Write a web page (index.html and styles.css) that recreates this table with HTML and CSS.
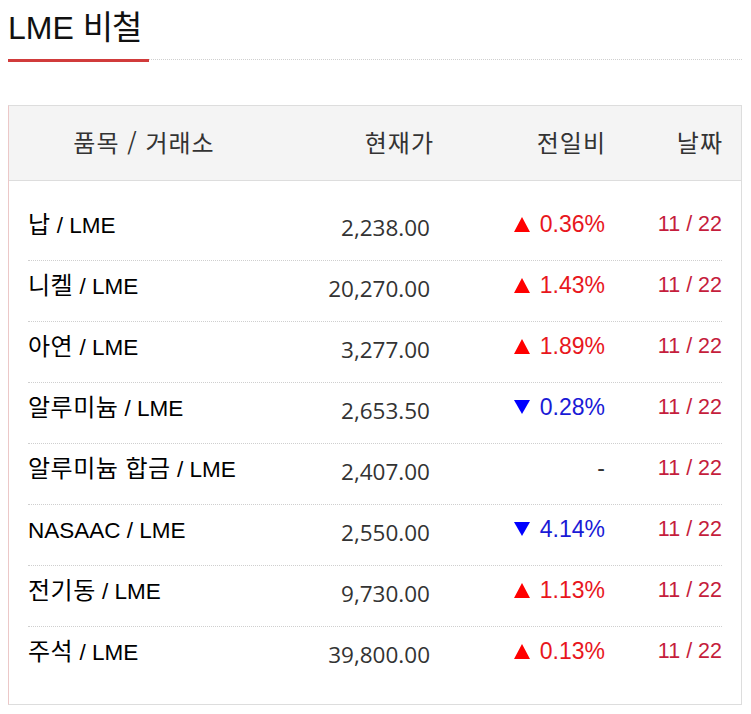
FILE: index.html
```html
<!DOCTYPE html>
<html lang="ko">
<head>
<meta charset="utf-8">
<link rel="stylesheet" href="styles.css">
</head>
<body>
<div class="page">
  <div class="title-bar">
    <h1 class="title">LME <span class="ko">비철</span></h1>
    <div class="title-rule"></div>
  </div>

  <div class="board">
    <div class="head grid">
      <div class="h-name">품목 / 거래소</div>
      <div class="h-price">현재가</div>
      <div class="h-chg">전일비</div>
      <div class="h-date">날짜</div>
    </div>
    <div class="rows">
      <div class="row grid">
        <div class="name"><span class="ko">납</span> / LME</div>
        <div class="price">2,238.00</div>
        <div class="chg up"><svg class="tri" width="16" height="15" viewBox="0 0 16 15"><polygon points="8,0 16,15 0,15"/></svg><span>0.36%</span></div>
        <div class="date">11 / 22</div>
      </div>
      <div class="row grid">
        <div class="name"><span class="ko">니켈</span> / LME</div>
        <div class="price">20,270.00</div>
        <div class="chg up"><svg class="tri" width="16" height="15" viewBox="0 0 16 15"><polygon points="8,0 16,15 0,15"/></svg><span>1.43%</span></div>
        <div class="date">11 / 22</div>
      </div>
      <div class="row grid">
        <div class="name"><span class="ko">아연</span> / LME</div>
        <div class="price">3,277.00</div>
        <div class="chg up"><svg class="tri" width="16" height="15" viewBox="0 0 16 15"><polygon points="8,0 16,15 0,15"/></svg><span>1.89%</span></div>
        <div class="date">11 / 22</div>
      </div>
      <div class="row grid">
        <div class="name"><span class="ko">알루미늄</span> / LME</div>
        <div class="price">2,653.50</div>
        <div class="chg down"><svg class="tri" width="16" height="14" viewBox="0 0 16 14"><polygon points="0,0 16,0 8,14"/></svg><span>0.28%</span></div>
        <div class="date">11 / 22</div>
      </div>
      <div class="row grid">
        <div class="name"><span class="ko">알루미늄 합금</span> / LME</div>
        <div class="price">2,407.00</div>
        <div class="chg flat"><span>-</span></div>
        <div class="date">11 / 22</div>
      </div>
      <div class="row grid">
        <div class="name">NASAAC / LME</div>
        <div class="price">2,550.00</div>
        <div class="chg down"><svg class="tri" width="16" height="14" viewBox="0 0 16 14"><polygon points="0,0 16,0 8,14"/></svg><span>4.14%</span></div>
        <div class="date">11 / 22</div>
      </div>
      <div class="row grid">
        <div class="name"><span class="ko">전기동</span> / LME</div>
        <div class="price">9,730.00</div>
        <div class="chg up"><svg class="tri" width="16" height="15" viewBox="0 0 16 15"><polygon points="8,0 16,15 0,15"/></svg><span>1.13%</span></div>
        <div class="date">11 / 22</div>
      </div>
      <div class="row grid">
        <div class="name"><span class="ko">주석</span> / LME</div>
        <div class="price">39,800.00</div>
        <div class="chg up"><svg class="tri" width="16" height="15" viewBox="0 0 16 15"><polygon points="8,0 16,15 0,15"/></svg><span>0.13%</span></div>
        <div class="date">11 / 22</div>
      </div>
    </div>
  </div>
</div>
</body>
</html>
```

FILE: styles.css
```css
html, body {
  background: #fff;
}
body {
  margin: 8px;
  font-family: "Liberation Sans", "Noto Sans CJK KR", sans-serif;
  color: #000;
}
.page {
  width: 734px;
}
.title-bar {
  display: flex;
  align-items: flex-end;
}
.title {
  margin: 0;
  padding: 2px 0 13px 0;
  width: 141px;
  height: 36px;
  font-size: 32px;
  line-height: 36px;
  font-weight: normal;
  color: #111;
  border-bottom: 3px solid #d13b3b;
  white-space: nowrap;
}
.title .ko {
  font-family: "Noto Sans CJK KR", sans-serif;
  font-size: 33px;
  line-height: 20px;
  letter-spacing: -1px;
}
.title-rule {
  flex: 1;
  border-bottom: 1px dotted #cfcfcf;
  margin-bottom: 2px;
}
.board {
  margin-top: 43px;
  border: 1px solid #dddddd;
  border-left-color: #ecc8c8;
}
.grid {
  display: grid;
  grid-template-columns: 232px 170px 175px 117px;
  align-items: center;
}
.head {
  height: 74px;
  padding: 0 19px;
  background: #f4f4f4;
  border-bottom: 1px solid #dddddd;
  font-size: 24px;
  letter-spacing: 1px;
  color: #333;
  font-family: "Noto Sans CJK KR", sans-serif;
}
.head > div {
  padding-bottom: 4px;
}
.h-name {
  text-align: center;
}
.h-price {
  text-align: right;
  margin-right: -4px;
}
.h-chg, .h-date {
  text-align: right;
  margin-right: -1px;
}
.rows {
  padding: 19px 19px 17px 19px;
}
.row {
  height: 60px;
  border-bottom: 1px dotted #cfcfcf;
}
.row:last-child {
  border-bottom: none;
}
.row > div {
  padding-bottom: 12px;
}
.row > .name {
  padding-bottom: 9px;
}
.name {
  font-size: 22.5px;
  color: #000;
  white-space: nowrap;
}
.name .ko {
  font-family: "Noto Sans CJK KR", sans-serif;
  font-size: 24px;
  line-height: 20px;
  letter-spacing: 0.5px;
}
.price {
  text-align: right;
  font-family: "Open Sans", sans-serif;
  font-size: 22.5px;
  color: #333;
  padding-top: 6px;
}
.chg {
  display: flex;
  justify-content: flex-end;
  align-items: center;
  gap: 10px;
  font-size: 23px;
}
.chg.up {
  color: #e8161d;
}
.chg.up .tri {
  fill: #ff0000;
}
.chg.down {
  color: #1a1ad6;
}
.chg.down .tri {
  fill: #0000ff;
}
.chg.flat {
  color: #333;
}
.date {
  text-align: right;
  font-size: 21.5px;
  color: #c51d3c;
}
```
